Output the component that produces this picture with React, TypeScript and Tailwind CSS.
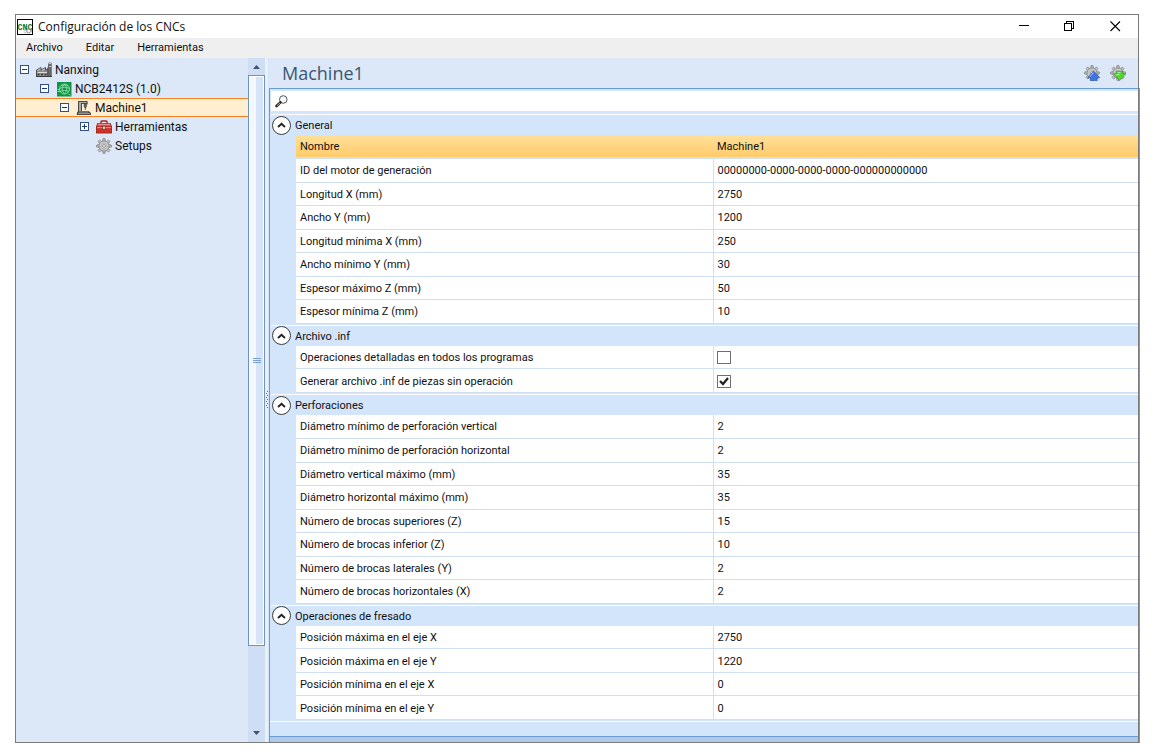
import React, { useState } from 'react';

type IconProps = { className?: string };

const AppLogo: React.FC<IconProps> = ({ className }) => (
  <svg viewBox="0 0 16 16" className={className} aria-hidden="true">
    <rect x="0.5" y="0.5" width="15" height="15" fill="#fff" stroke="#000" />
    <text x="8" y="10.5" textAnchor="middle" fontFamily="Liberation Mono, monospace" fontSize="8.4" fontWeight="700" fill="#0a7a1c">
      CNC
    </text>
    <circle cx="12" cy="11.8" r="2" fill="none" stroke="#999" strokeWidth="1.6" strokeDasharray="1.2 0.5" />
    <circle cx="8.3" cy="12.6" r="1.2" fill="none" stroke="#a6a6a6" strokeWidth="1" strokeDasharray="0.9 0.4" />
  </svg>
);

const FactoryIcon: React.FC<IconProps> = ({ className }) => (
  <svg viewBox="0 0 16 16" className={className} aria-hidden="true">
    <path d="M0.5 14.5V8L5 5.5V8l4.5-2.5V8l2.5-1.4v7.9z" fill="#8e8e8e" stroke="#4d4d4d" />
    <path d="M12 14.5V7l1-6h2.2v13.5z" fill="#6d6d6d" stroke="#474747" strokeWidth="0.8" />
    <path d="M13.2 1.5h2M13.2 4.5h2" stroke="#dedede" />
    <path d="M1.5 8.4l3-1.6M6 8.4l3-1.6" stroke="#d5d5d5" />
    <path d="M1.5 10.5h9.5" stroke="#dcdcdc" />
    <path d="M1.5 12.5h2M5 12.5h2M8.5 12.5h2" stroke="#3b3b3b" strokeWidth="1.6" />
    <path d="M0 14.5h16" stroke="#3b3b3b" />
  </svg>
);

const GlobeIcon: React.FC<IconProps> = ({ className }) => (
  <svg viewBox="0 0 16 16" className={className} aria-hidden="true">
    <rect x="1" y="1" width="14.5" height="14.5" fill="#119447" />
    <g fill="none" stroke="#8fd9a5" strokeWidth="0.9">
      <circle cx="8.5" cy="8" r="5" />
      <path d="M3.5 7.5c3-1.6 7-1.6 10 0M4 10.5c3-1.4 6-1.4 9 0M5 4.8c2-.9 5-.9 7 0" />
      <path d="M8.5 3c-3 3-3 7 0 10M8.5 3c3 3 3 7 0 10" />
    </g>
    <path d="M1.5 8.5h2.5M1.5 10.5h3M12.5 13l2 1" stroke="#a8e2b8" strokeWidth="0.8" />
  </svg>
);

const MachineIcon: React.FC<IconProps> = ({ className }) => (
  <svg viewBox="0 0 16 16" className={className} aria-hidden="true">
    <path d="M2 1h9.5v3H6v7.5H2z" fill="#4a4a4a" />
    <path d="M3 2h7.5v1H5v8H3z" fill="#a9a9a9" />
    <path d="M7.8 4h3v3l-1 1v2h-1V8l-1-1z" fill="#5a5a5a" />
    <path d="M11.5 2.5v2" stroke="#7a7a7a" />
    <path d="M2 11h10.5l2.5 2v2H0.8v-2z" fill="#4a4a4a" />
    <path d="M3 12h9M2 13.5h12" stroke="#9c9c9c" strokeWidth="0.9" />
  </svg>
);

const ToolboxIcon: React.FC<IconProps> = ({ className }) => (
  <svg viewBox="0 0 16 16" className={className} aria-hidden="true">
    <path d="M5 4.5V2.8q0-.8.8-.8h4.4q.8 0 .8.8v1.7" fill="none" stroke="#a4261f" strokeWidth="1.5" />
    <path d="M1.5 4.5h13l1 3.5H.5z" fill="#e2574d" stroke="#a4261f" strokeWidth="0.9" />
    <rect x="0.5" y="8" width="15" height="6" fill="#cf3229" stroke="#9b231c" strokeWidth="0.9" />
    <path d="M2 5.3h12" stroke="#f29a92" />
    <path d="M1 8.6h14" stroke="#f2b1ac" strokeWidth="0.8" />
    <rect x="6.4" y="7.2" width="3.2" height="3" fill="#dadada" stroke="#7a2a25" strokeWidth="0.7" />
  </svg>
);

const GearShape = () => (
  <g>
    {[0, 45, 90, 135, 180, 225, 270, 315].map((angle) => (
      <path
        key={angle}
        d="M6.7 3.4L7 0.7h2l.3 2.7z"
        transform={`rotate(${angle} 8 8)`}
        fill="#cfcfcf"
        stroke="#777"
        strokeWidth="0.8"
      />
    ))}
    <circle cx="8" cy="8" r="5" fill="#cfcfcf" stroke="#838383" strokeWidth="0.8" />
    <circle cx="8" cy="8" r="3" fill="#dedede" stroke="#a3a3a3" strokeWidth="0.7" />
    <circle cx="8" cy="8" r="1.5" fill="#eef3fa" stroke="#7d7d7d" strokeWidth="0.8" />
  </g>
);

const GearIcon: React.FC<IconProps> = ({ className }) => (
  <svg viewBox="0 0 16 16" className={className} aria-hidden="true">
    <GearShape />
  </svg>
);

const GearUpIcon: React.FC<IconProps> = ({ className }) => (
  <svg viewBox="0 0 16 16" className={className} aria-hidden="true">
    <GearShape />
    <path d="M9.8 6.2L15.8 12.8h-2.6v2.8H6.4v-2.8H3.8z" fill="#3f74e0" stroke="#2653b8" strokeWidth="0.7" />
    <path d="M9.6 7.6L5.8 12" stroke="#9cbcf6" />
  </svg>
);

const GearDownIcon: React.FC<IconProps> = ({ className }) => (
  <svg viewBox="0 0 16 16" className={className} aria-hidden="true">
    <GearShape />
    <path d="M6.4 6.4h6.4v2.4h2.9L9.6 15.6 3.6 8.8h2.8z" fill="#52d632" stroke="#2f9e1c" strokeWidth="0.7" />
    <path d="M7.4 7.4h3M5.6 9.7h4" stroke="#b0f39c" />
  </svg>
);

const SearchIcon: React.FC<IconProps> = ({ className }) => (
  <svg viewBox="0 0 13 13" className={className} aria-hidden="true">
    <circle cx="8.3" cy="4.5" r="3.8" fill="#f4f8fc" stroke="#555" strokeWidth="1" />
    <path d="M5.4 7.4L1.6 11" stroke="#222" strokeWidth="2.6" strokeLinecap="round" />
    <path d="M5 7.9L2 10.7" stroke="#d8b07a" strokeWidth="1" />
  </svg>
);

const ExpanderBox = ({ open }: { open: boolean }) => (
  <svg viewBox="0 0 9 9" className="h-[9px] w-[9px]" aria-hidden="true" shapeRendering="crispEdges">
    <rect x="0.5" y="0.5" width="8" height="8" fill="#fff" stroke="#2f4f86" />
    <path d={open ? 'M2 4.5h5' : 'M2 4.5h5M4.5 2v5'} stroke="#1d3a70" />
  </svg>
);

const menus = ['Archivo', 'Editar', 'Herramientas'];

const treeItems = [
  { label: 'Nanxing', Icon: FactoryIcon, indent: 'pl-1', open: true },
  { label: 'NCB2412S (1.0)', Icon: GlobeIcon, indent: 'pl-6', open: true },
  { label: 'Machine1', Icon: MachineIcon, indent: 'pl-11', open: true, selected: true },
  { label: 'Herramientas', Icon: ToolboxIcon, indent: 'pl-16', open: false },
  { label: 'Setups', Icon: GearIcon, indent: 'pl-16' },
];

type Row = { label: string; value: string | boolean; selected?: boolean };

const groups: { title: string; rows: Row[] }[] = [
  {
    title: 'General',
    rows: [
      { label: 'Nombre', value: 'Machine1', selected: true },
      { label: 'ID del motor de generación', value: '00000000-0000-0000-0000-000000000000' },
      { label: 'Longitud X (mm)', value: '2750' },
      { label: 'Ancho Y (mm)', value: '1200' },
      { label: 'Longitud mínima X (mm)', value: '250' },
      { label: 'Ancho mínimo Y (mm)', value: '30' },
      { label: 'Espesor máximo Z (mm)', value: '50' },
      { label: 'Espesor mínima Z (mm)', value: '10' },
    ],
  },
  {
    title: 'Archivo .inf',
    rows: [
      { label: 'Operaciones detalladas en todos los programas', value: false },
      { label: 'Generar archivo .inf de piezas sin operación', value: true },
    ],
  },
  {
    title: 'Perforaciones',
    rows: [
      { label: 'Diámetro mínimo de perforación vertical', value: '2' },
      { label: 'Diámetro mínimo de perforación horizontal', value: '2' },
      { label: 'Diámetro vertical máximo (mm)', value: '35' },
      { label: 'Diámetro horizontal máximo (mm)', value: '35' },
      { label: 'Número de brocas superiores (Z)', value: '15' },
      { label: 'Número de brocas inferior (Z)', value: '10' },
      { label: 'Número de brocas laterales (Y)', value: '2' },
      { label: 'Número de brocas horizontales (X)', value: '2' },
    ],
  },
  {
    title: 'Operaciones de fresado',
    rows: [
      { label: 'Posición máxima en el eje X', value: '2750' },
      { label: 'Posición máxima en el eje Y', value: '1220' },
      { label: 'Posición mínima en el eje X', value: '0' },
      { label: 'Posición mínima en el eje Y', value: '0' },
    ],
  },
];

const CheckCell = ({ id, initial }: { id: string; initial: boolean }) => {
  const [checked, setChecked] = useState(initial);
  return (
    <span className="relative -ml-px block h-[13px] w-[14px]">
      <input
        id={id}
        type="checkbox"
        checked={checked}
        onChange={() => setChecked(!checked)}
        className="block h-full w-full appearance-none border border-[#707070] bg-white"
      />
      {checked && (
        <svg viewBox="0 0 14 13" className="pointer-events-none absolute inset-0 h-full w-full" aria-hidden="true">
          <path d="M3 6l3 3 5-6" fill="none" stroke="#212121" strokeWidth="2.2" />
        </svg>
      )}
    </span>
  );
};

const PropertyGroup = ({ title, rows }: { title: string; rows: Row[] }) => {
  const [open, setOpen] = useState(true);
  return (
    <section className="rounded-tl border-t border-white bg-[#d3e5fb] pb-px">
      <div className="flex h-5 items-center gap-1 pl-0.5">
        <button
          type="button"
          aria-label={title}
          aria-expanded={open}
          onClick={() => setOpen(!open)}
          className="flex h-[19px] w-[19px] shrink-0 items-center justify-center rounded-full border border-[#3a3a3a] bg-white"
        >
          <svg viewBox="0 0 9 6" className={open ? 'h-1.5 w-[9px]' : 'h-1.5 w-[9px] rotate-180'} aria-hidden="true">
            <path d="M1 5l3.5-3.3L8 5" fill="none" stroke="#222" strokeWidth="1.9" />
          </svg>
        </button>
        <h2 className="pt-0.5 text-[11px] leading-4">{title}</h2>
      </div>
      {open && (
        <div className="pl-[26px]">
          <table className="w-full table-fixed border-collapse text-left text-[11px] leading-4">
            <colgroup>
              <col className="w-[417px]" />
              <col />
            </colgroup>
            <tbody>
              {rows.map((row, i) => {
                const id = `${title}-${i}`;
                return (
                  <tr
                    key={id}
                    className={
                      row.selected
                        ? 'h-[23px] border-b border-[#d0e0f2] bg-gradient-to-b from-[#ffe09a] to-[#ffcb68]'
                        : 'h-6 border-b border-[#d0e0f2] bg-white odd:h-[23px]'
                    }
                  >
                    <th
                      scope="row"
                      className={
                        row.selected ? 'p-0 pt-0.5 pl-1 font-normal' : 'border-r border-[#d0e0f2] p-0 pt-0.5 pl-1 font-normal'
                      }
                    >
                      {typeof row.value === 'boolean' ? <label htmlFor={id}>{row.label}</label> : row.label}
                    </th>
                    <td className="p-0 pt-0.5 pl-1">
                      {typeof row.value === 'boolean' ? <CheckCell id={id} initial={row.value} /> : row.value}
                    </td>
                  </tr>
                );
              })}
            </tbody>
          </table>
        </div>
      )}
    </section>
  );
};

const App: React.FC = () => {
  return (
    <div className="flex min-h-screen flex-col bg-white pt-3.5 pr-4 pb-3 pl-[15px] font-[Roboto,sans-serif] text-[12px] text-[#111]">
      <div className="relative flex flex-1 flex-col border border-[#7b7b7b]">
        {/* Title bar */}
        <header className="flex h-[23px] items-center justify-between">
          <div className="flex items-center gap-[5px] pl-px">
            <AppLogo className="h-4 w-4" />
            <h1 className="font-['Open_Sans',sans-serif]">Configuración de los CNCs</h1>
          </div>
          <div className="flex h-full">
            <button type="button" aria-label="Minimizar" className="flex w-[46px] items-center justify-center">
              <svg viewBox="0 0 11 11" className="h-[11px] w-[11px]" shapeRendering="crispEdges">
                <path d="M1 4.5h10" stroke="#000" />
              </svg>
            </button>
            <button type="button" aria-label="Restaurar" className="flex w-[46px] items-center justify-center">
              <svg viewBox="0 0 11 11" className="h-[11px] w-[11px]" shapeRendering="crispEdges" fill="none" stroke="#000">
                <path d="M0.5 2.5h7v7h-7zM2.5 2.5v-2h7v7h-2" />
              </svg>
            </button>
            <button type="button" aria-label="Cerrar" className="flex w-[46px] items-center justify-center">
              <svg viewBox="0 0 11 11" className="h-[11px] w-[11px]">
                <path d="M0.5 0.5l9.5 9.5M10 0.5l-9.5 9.5" stroke="#000" strokeWidth="1.1" />
              </svg>
            </button>
          </div>
        </header>

        {/* Menu */}
        <nav className="flex h-5 items-center gap-[23px] bg-[#efefef] pl-2.5 text-[11px]">
          {menus.map((menu) => (
            <button key={menu} type="button">
              {menu}
            </button>
          ))}
        </nav>

        <div className="flex flex-1">
          {/* Machine tree */}
          <aside className="w-[232px] shrink-0 bg-[#dce8f7] pt-0.5">
            {treeItems.map(({ label, Icon, indent, open, selected }) => (
              <button
                key={label}
                type="button"
                className={`flex h-[19px] w-full items-center ${indent} ${
                  selected ? 'border-y border-[#f5821f] bg-[#ffefd0]' : ''
                }`}
              >
                <span className="w-4">{open !== undefined && <ExpanderBox open={open} />}</span>
                <Icon className="mr-[3px] h-4 w-4" />
                {label}
              </button>
            ))}
          </aside>

          {/* Scrollbar */}
          <div className="flex w-[17px] shrink-0 flex-col bg-[#cddef5]">
            <button type="button" aria-label="Subir" className="flex h-[17px] items-center justify-center">
              <svg viewBox="0 0 7 4" className="h-1 w-[7px]">
                <path d="M0 4L3.5 0 7 4z" fill="#41536f" />
              </svg>
            </button>
            <div className="flex flex-[571] items-center justify-center border border-[#6c93c9] bg-gradient-to-r from-[#f3f8ff] from-50% to-[#d6e4f8] to-50% shadow-[inset_0_0_0_1px_#fff]">
              <svg viewBox="0 0 8 5" className="h-[5px] w-2" shapeRendering="crispEdges">
                <path d="M0 0.5h8M0 2.5h8M0 4.5h8" stroke="#7c9fcf" />
              </svg>
            </div>
            <div className="flex-[78]" />
            <button type="button" aria-label="Bajar" className="flex h-[18px] items-center justify-center">
              <svg viewBox="0 0 7 4" className="h-1 w-[7px]">
                <path d="M0 0L3.5 4 7 0z" fill="#41536f" />
              </svg>
            </button>
          </div>

          {/* Splitter */}
          <div className="flex w-1 shrink-0 items-center justify-center border-r border-[#d3e5fb] bg-[#efefef]">
            <svg viewBox="0 0 3 18" className="h-[18px] w-[3px]" shapeRendering="crispEdges">
              <path d="M2 0h1v1h-1zM1 2h1v1h-1zM2 4h1v1h-1zM1 6h1v1h-1zM2 8h1v1h-1zM1 10h1v1h-1zM2 12h1v1h-1zM1 14h1v1h-1zM2 16h1v1h-1z" fill="#3f6cab" />
            </svg>
          </div>

          {/* Properties */}
          <main className="flex min-w-0 flex-1 flex-col bg-[#dce8f7]">
            <div className="flex h-[30px] items-center justify-between pr-3 pl-[13px]">
              <h1 className="font-['Open_Sans',sans-serif] text-[18px] text-[#3b5672]">Machine1</h1>
              <div className="flex gap-2.5">
                <button type="button" aria-label="Exportar">
                  <GearUpIcon className="h-4 w-4" />
                </button>
                <button type="button" aria-label="Importar">
                  <GearDownIcon className="h-4 w-4" />
                </button>
              </div>
            </div>
            <div className="flex flex-1 flex-col border-t border-l border-[#6c9ad3] bg-[#d3e5fb] pt-0.5">
              <label className="mb-[3px] ml-px flex h-5 items-center gap-1 bg-white pl-1">
                <SearchIcon className="h-[13px] w-[13px]" />
                <input type="text" aria-label="Buscar" className="min-w-0 flex-1 text-[11px] outline-none" />
              </label>
              {groups.map((group) => (
                <PropertyGroup key={group.title} {...group} />
              ))}
              <div className="flex-1 border-t border-white" />
              <div className="h-1.5 border-t border-[#6c9ad3] bg-[#b0c9e8]" />
            </div>
          </main>
        </div>
        <div className="absolute top-[73px] -right-0.5 -bottom-px w-px bg-[#6c9ad3]" />
      </div>
    </div>
  );
};

export default App;
